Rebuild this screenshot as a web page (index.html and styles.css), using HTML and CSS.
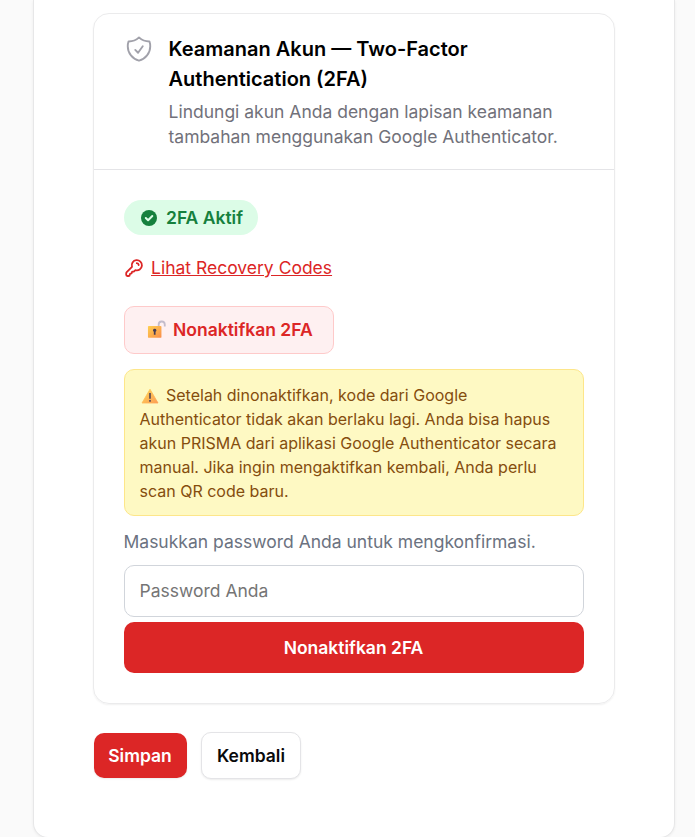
FILE: index.html
```html
<!DOCTYPE html>
<html lang="id">
<head>
    <meta charset="UTF-8">
    <title>Keamanan Akun</title>
    <link rel="stylesheet" href="styles.css">
</head>
<body>
    <main class="panel">
        <section class="card">
            <header class="card-header">
                <svg class="shield-icon" viewBox="0 0 24 24" fill="none" stroke="currentColor" stroke-width="1.5" stroke-linecap="round" stroke-linejoin="round">
                    <path d="M9 12.75 11.25 15 15 9.75m-3-7.036A11.959 11.959 0 0 1 3.598 6 11.99 11.99 0 0 0 3 9.749c0 5.592 3.824 10.29 9 11.623 5.176-1.332 9-6.03 9-11.622 0-1.31-.21-2.571-.598-3.751h-.152c-3.196 0-6.1-1.248-8.25-3.285Z"/>
                </svg>
                <div>
                    <h3>Keamanan Akun — Two-Factor Authentication (2FA)</h3>
                    <p>Lindungi akun Anda dengan lapisan keamanan tambahan menggunakan Google Authenticator.</p>
                </div>
            </header>
            <div class="card-body">
                <div class="status-badge">
                    <svg class="check-icon" viewBox="0 0 20 20" fill="currentColor">
                        <circle cx="10" cy="10" r="8"/>
                        <path d="m6.8 10 2.3 2.3 4.2-4.3" fill="none" stroke="#dcfce7" stroke-width="2" stroke-linecap="round" stroke-linejoin="round"/>
                    </svg>
                    2FA Aktif
                </div>
                <div class="recovery">
                    <svg class="key-icon" viewBox="0 0 20 20" fill="none" stroke="currentColor" stroke-width="1.8" stroke-linecap="round" stroke-linejoin="round">
                        <path d="M8 8.8A5.1 5.1 0 1 1 11.4 12.1L9.8 13.6H8.6q-.8 0-.8.8v.4q0 .8-.8.8h-.4q-.8 0-.8.8v.3q0 1.3-1.3 1.3H3.4q-1.2 0-1.2-1.2v-1.4q0-.7.5-1.2Z"/>
                        <path d="M12.8 5.2q1.6.1 1.9 1.8"/>
                    </svg>
                    <a href="#">Lihat Recovery Codes</a>
                </div>
                <button type="button" class="disable-toggle">
                    <svg class="lock-icon" viewBox="0 0 20 20">
                        <path d="M12.3 7V5a3.2 3.2 0 0 1 6.4-.4v2.2" fill="none" stroke="#c3bccb" stroke-width="1.9"/>
                        <rect x="1" y="6.2" width="14.2" height="12.6" rx="1" fill="url(#gold)"/>
                        <path d="M8.1 9.2a1.7 1.7 0 0 1 .9 3.2v3.2H7.2v-3.2a1.7 1.7 0 0 1 .9-3.2Z" fill="#453c55"/>
                        <defs>
                            <linearGradient id="gold" x1="0" y1="0" x2="1" y2="1">
                                <stop offset="0" stop-color="#ffd04f"/>
                                <stop offset="1" stop-color="#f98d4b"/>
                            </linearGradient>
                        </defs>
                    </svg>
                    Nonaktifkan 2FA
                </button>
                <div class="warning">
                    <svg class="warning-icon" viewBox="0 0 18 16">
                        <path d="M9 1.2 17 15H1Z" fill="url(#amber)" stroke="url(#amber)" stroke-width="0.8" stroke-linejoin="round"/>
                        <path d="M9 5v5.8M9 12v1.8" stroke="#453c55" stroke-width="1.5"/>
                        <defs>
                            <linearGradient id="amber" x1="0" y1="0" x2="1" y2="1">
                                <stop offset="0" stop-color="#ffd657"/>
                                <stop offset="1" stop-color="#fd9e54"/>
                            </linearGradient>
                        </defs>
                    </svg>
                    Setelah dinonaktifkan, kode dari Google Authenticator tidak akan berlaku lagi. Anda bisa hapus akun PRISMA dari aplikasi Google Authenticator secara manual. Jika ingin mengaktifkan kembali, Anda perlu scan QR code baru.
                </div>
                <p class="confirm-text">Masukkan password Anda untuk mengkonfirmasi.</p>
                <input type="password" class="password" placeholder="Password Anda">
                <button type="button" class="confirm-btn">Nonaktifkan 2FA</button>
            </div>
        </section>
        <div class="actions">
            <button type="submit" class="btn btn-primary">Simpan</button>
            <button type="button" class="btn btn-secondary">Kembali</button>
        </div>
    </main>
</body>
</html>
```

FILE: styles.css
```css
* {
    box-sizing: border-box;
}
body {
    font-family: Inter, "Liberation Sans", sans-serif;
    font-size: 17.5px;
    line-height: 25px;
    background: #fafafa;
    color: #09090b;
    margin: 0;
    height: 837px;
    overflow: hidden;
}
h3, p {
    margin: 0;
}
h3 {
    color: #000;
}
button, input {
    font-family: inherit;
    font-size: inherit;
    line-height: inherit;
}
.panel {
    width: 642px;
    height: 838px;
    margin-left: 33px;
    padding: 13px 60px 0;
    background: #fff;
    border: 1px solid #e7e7e8;
    border-top: none;
    border-radius: 0 0 15px 15px;
    box-shadow: 0 1px 3px rgba(0, 0, 0, 0.06);
}
.card {
    width: 522px;
    height: 691px;
    margin-left: -1px;
    border: 1px solid #ebebec;
    border-radius: 16px;
    box-shadow: 0 1px 2px rgba(0, 0, 0, 0.06);
}
.card-header {
    display: flex;
    gap: 14.5px;
    height: 156px;
    padding: 20px 30px;
    border-bottom: 1px solid #e4e4e7;
}
.shield-icon {
    flex: none;
    width: 30px;
    height: 30px;
    color: #a1a1aa;
}
.card-header h3 {
    font-size: 20px;
    font-weight: 600;
    line-height: 30px;
}
.card-header p {
    margin-top: 5px;
    color: #71717a;
}
.card-body {
    padding: 30px;
}
.status-badge {
    display: flex;
    align-items: center;
    gap: 7px;
    width: 134px;
    height: 35px;
    padding-left: 15px;
    background: #dcfce7;
    color: #15803d;
    font-weight: 600;
    border-radius: 18px;
}
.check-icon {
    width: 20px;
    height: 20px;
}
.recovery {
    display: flex;
    align-items: center;
    gap: 7px;
    margin-top: 20px;
    color: #dc2626;
}
.recovery a {
    color: inherit;
}
.key-icon {
    width: 20px;
    height: 20px;
}
.disable-toggle {
    display: flex;
    align-items: center;
    gap: 7px;
    width: 210px;
    height: 48px;
    margin-top: 26px;
    padding: 0 0 2px 22px;
    background: #fef0f1;
    color: #dc2626;
    font-weight: 600;
    border: 1px solid #fecaca;
    border-radius: 10px;
}
.lock-icon {
    width: 19px;
    height: 19px;
}
.warning {
    height: 147px;
    margin-top: 15px;
    padding: 13px 14.5px;
    background: #fef9c3;
    color: #854d0e;
    font-size: 16px;
    line-height: 24px;
    border: 1px solid #fde68a;
    border-radius: 10px;
}
.warning-icon {
    width: 18px;
    height: 16px;
    margin: 0 3px 0 1px;
    vertical-align: -3px;
}
.confirm-text {
    margin-top: 13px;
    margin-left: -0.5px;
    color: #6b7280;
}
.password {
    display: block;
    width: 100%;
    height: 52px;
    margin-top: 11px;
    padding: 0 14.5px 2px;
    background: #fff;
    border: 1px solid #d1d5db;
    border-radius: 10px;
}
.password::placeholder {
    color: #757575;
}
.confirm-btn {
    display: block;
    width: 100%;
    height: 51px;
    margin-top: 5px;
    padding: 0 1px 0 0;
    background: #dc2626;
    color: #fff;
    font-weight: 600;
    border: none;
    border-radius: 10px;
}
.actions {
    display: flex;
    align-items: center;
    gap: 14px;
    margin-top: 28px;
}
.btn {
    height: 45px;
    padding: 0;
    font-weight: 600;
    border: none;
    border-radius: 10px;
    box-shadow: 0 1px 2px rgba(0, 0, 0, 0.08);
}
.btn-primary {
    width: 93px;
    padding-right: 1px;
    background: #dc2626;
    color: #fff;
}
.btn-secondary {
    width: 100px;
    height: 47px;
    background: #fff;
    color: #09090b;
    border: 1px solid #e4e4e7;
}
```
